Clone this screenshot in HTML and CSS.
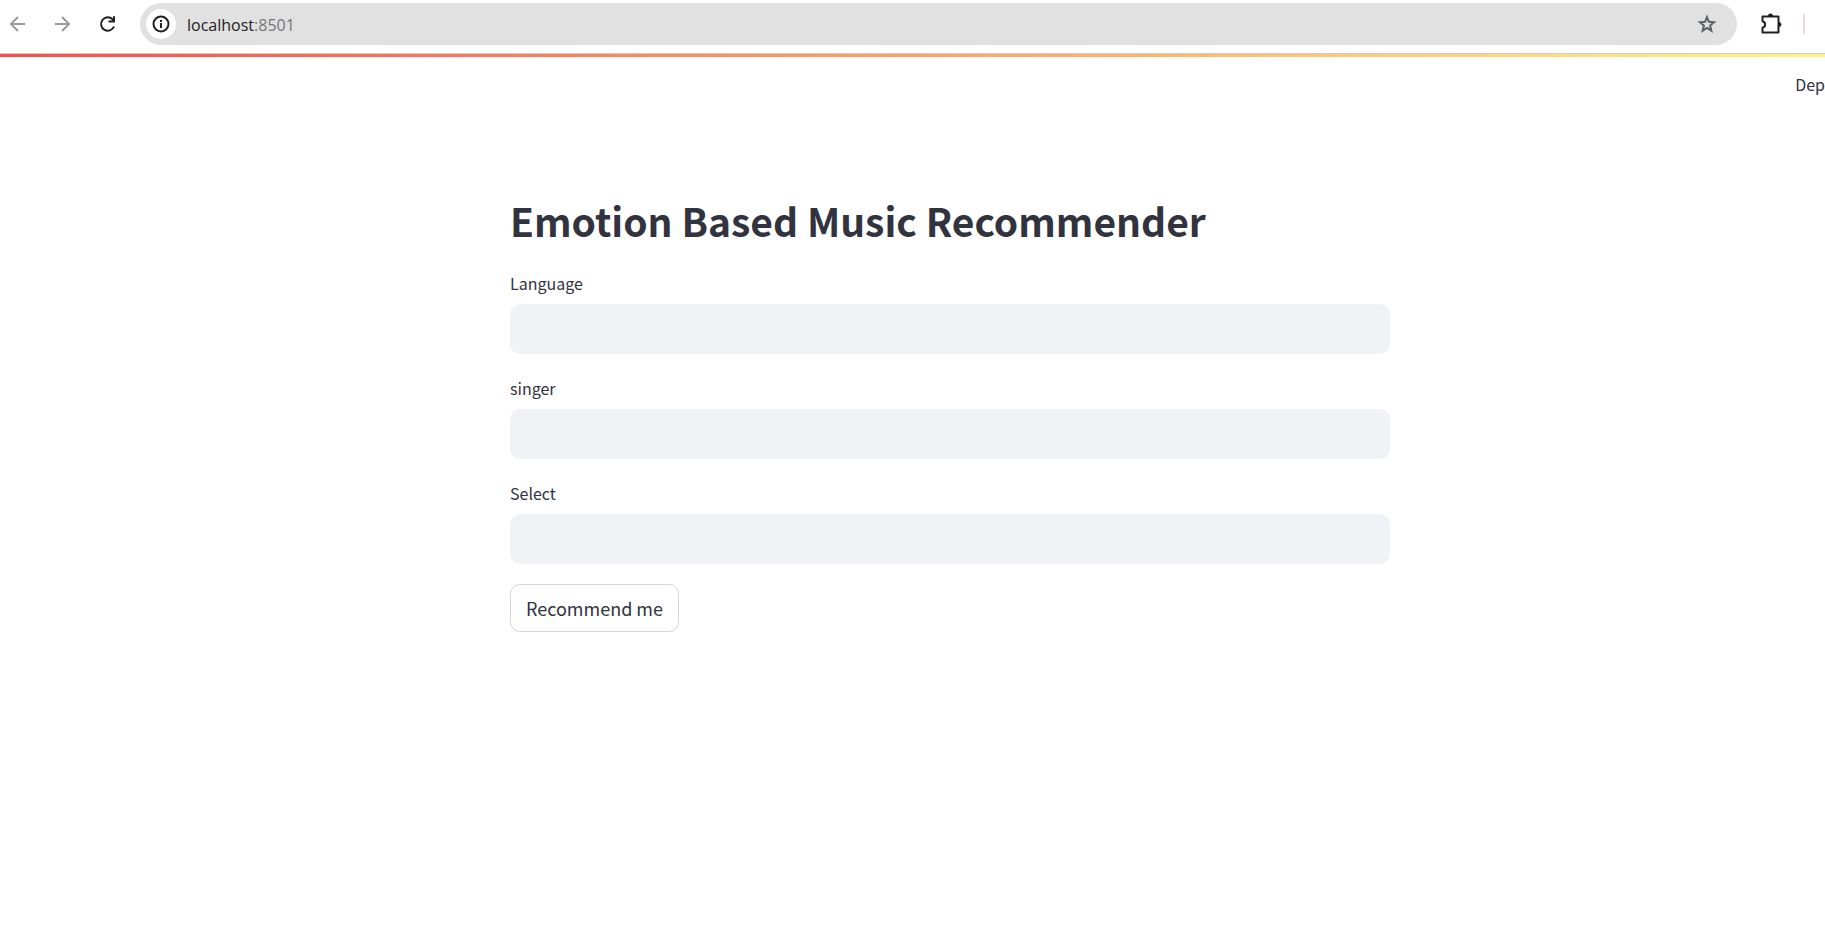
FILE: index.html
```html
<!DOCTYPE html>
<html lang="en">
<head>
<meta charset="utf-8">
<title>Emotion Based Music Recommender</title>
<link rel="stylesheet" href="styles.css">
</head>
<body>
<header class="toolbar">
  <nav class="nav">
    <button class="icon-button muted" type="button" aria-label="Back">
      <svg width="20" height="20" viewBox="0 0 20 20" fill="none" stroke="currentColor" stroke-width="2"><path d="M17 10H4M10 3L3 10l7 7"/></svg>
    </button>
    <button class="icon-button muted" type="button" aria-label="Forward">
      <svg width="20" height="20" viewBox="0 0 20 20" fill="none" stroke="currentColor" stroke-width="2"><path d="M2 10H15M9 3l7 7l-7 7"/></svg>
    </button>
    <button class="icon-button" type="button" aria-label="Reload">
      <svg width="20" height="20" viewBox="0 0 20 20" fill="none" stroke="currentColor" stroke-width="2"><path d="M16 12.500A6.700 6.700 0 1 1 14.500 5.300L16 7"/><path d="M10.500 7.500H16V2.200"/></svg>
    </button>
  </nav>
  <div class="omnibox">
    <button class="site-info" type="button" aria-label="Site information">
      <svg width="18" height="18" viewBox="0 0 18 18" fill="none" stroke="currentColor" stroke-width="2"><circle cx="9" cy="9" r="7.500"/><path d="M9 8v5M9 5v2" /></svg>
    </button>
    <span class="address">localhost<span class="port">:8501</span></span>
    <button class="icon-button star" type="button" aria-label="Bookmark">
      <svg width="20" height="20" viewBox="0 0 20 20" fill="none" stroke="currentColor" stroke-width="2"><path d="M10 3l1.900 4.800 5.100.4-3.900 3.300 1.300 5.200L10 13.900l-4.400 2.800 1.300-5.200L3 8.200l5.100-.4z"/></svg>
    </button>
  </div>
  <button class="icon-button extensions" type="button" aria-label="Extensions">
    <svg width="22" height="22" viewBox="0 0 22 22"><path d="M2.500 3.500h16v16h-16v-4.800c3.500-1 3.500-5.400 0-6.400z" fill="none" stroke="currentColor" stroke-width="2" stroke-linejoin="round"/><path d="M8 3a2.500 2.500 0 0 1 5 0zM19 9a2.500 2.500 0 0 1 0 5z" fill="currentColor"/></svg>
  </button>
  <span class="divider"></span>
</header>
<div class="app">
  <div class="decoration"></div>
  <div class="app-header"><button class="deploy" type="button">Dep</button></div>
  <main class="content">
    <h1 class="title">Emotion Based Music Recommender</h1>
    <form class="form">
      <div class="field"><label class="label" for="language">Language</label><input class="input" id="language" type="text"></div>
      <div class="field"><label class="label" for="singer">singer</label><input class="input" id="singer" type="text"></div>
      <div class="field"><label class="label" for="select">Select</label><input class="input" id="select" type="text"></div>
      <button class="submit" type="button">Recommend me</button>
    </form>
  </main>
</div>
</body>
</html>
```
FILE: styles.css
```css
* {
  box-sizing: border-box;
}

body {
  margin: 0;
  overflow: hidden;
  background: #fff;
  color: #31333f;
  font-family: "Noto Sans CJK SC", "Open Sans", sans-serif;
}

button {
  padding: 0;
  border: 0;
  background: none;
  color: inherit;
  font: inherit;
}

svg {
  display: block;
}

.toolbar {
  display: flex;
  align-items: center;
  padding: 3px 20px 8px 8px;
  border-bottom: 1px solid #c9cbcf;
  color: #1f2023;
}

.nav {
  display: flex;
  gap: 25px;
  margin-right: 22px;
}

.muted {
  color: #9b9b9b;
}

.omnibox {
  display: flex;
  flex: 1;
  align-items: center;
  height: 42px;
  padding: 0 20px 0 6px;
  border-radius: 21px;
  background: #e1e1e1;
}

.site-info {
  display: grid;
  place-items: center;
  width: 30px;
  height: 30px;
  border-radius: 50%;
  background: #fff;
}

.address {
  flex: 1;
  margin-left: 11px;
  padding-top: 1px;
  font: 400 16px/24px "Open Sans", sans-serif;
}

.port {
  color: #757575;
}

.star {
  color: #5f6164;
}

.extensions {
  margin-left: 23px;
}

.divider {
  width: 2px;
  height: 20px;
  margin-left: 21px;
  background: #f6d3e2;
}

.app {
  width: calc(100% + 75px);
}

.decoration {
  height: 3px;
  background: linear-gradient(90deg, #ff4b4b, #fffd80);
}

.app-header {
  display: flex;
  justify-content: flex-end;
  padding: 15px 75px 0 0;
}

.deploy {
  font-size: 16px;
  line-height: 24px;
}

.content {
  max-width: 880px;
  margin: 0 auto;
  padding-top: 94px;
}

.title {
  margin: 0;
  font-size: 39px;
  font-weight: 600;
  line-height: 60px;
}

.form {
  display: flex;
  flex-direction: column;
  align-items: flex-start;
  gap: 20px;
  padding-top: 19px;
}

.field {
  display: flex;
  flex-direction: column;
  width: 100%;
}

.label {
  padding-bottom: 7px;
  font-size: 16px;
  line-height: 28px;
}

.input {
  height: 50px;
  padding: 0 14px;
  border: 0;
  border-radius: 10px;
  background: #f0f2f6;
  font: inherit;
}

.submit {
  padding: 9px 15px;
  border: 1px solid #d6d6d9;
  border-radius: 10px;
  font-size: 18px;
  line-height: 28px;
}
```
